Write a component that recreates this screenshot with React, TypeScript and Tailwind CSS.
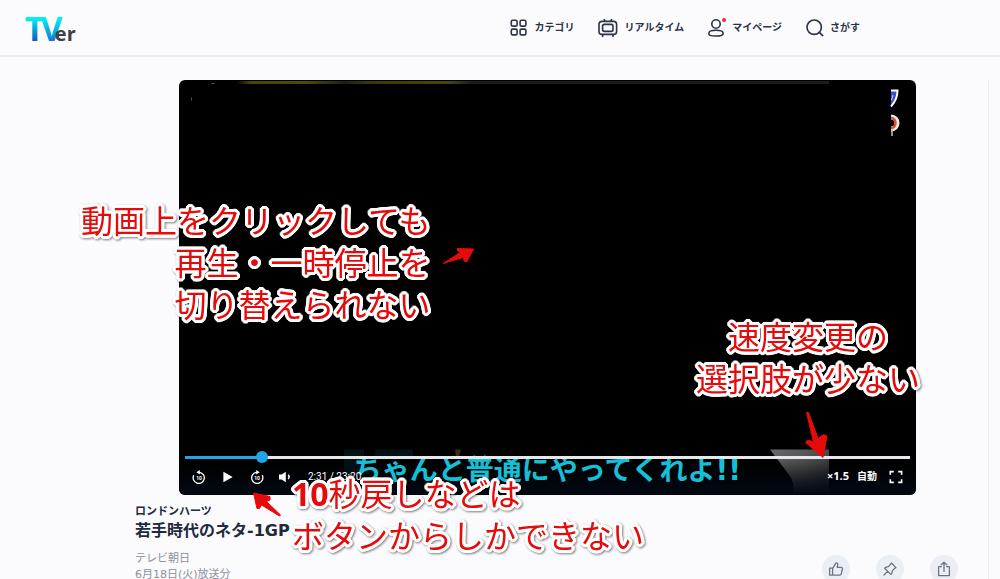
import { useState } from "react";
import type { ReactNode } from "react";

const GridIcon = () => (
  <svg className="h-[18px] w-[18px]" viewBox="0 0 18 18" fill="none" stroke="currentColor" strokeWidth="1.6" aria-hidden="true">
    <rect x="1.3" y="1.3" width="5.8" height="5.8" rx="1.4" />
    <rect x="10.1" y="1.3" width="5.8" height="5.8" rx="1.4" />
    <rect x="1.3" y="10.1" width="5.8" height="5.8" rx="1.4" />
    <rect x="10.1" y="10.1" width="5.8" height="5.8" rx="1.4" />
  </svg>
);

const TvIcon = () => (
  <svg className="h-5 w-5" viewBox="0 0 20 20" fill="none" stroke="currentColor" strokeWidth="1.6" strokeLinecap="round" aria-hidden="true">
    <rect x="1" y="3.4" width="17.6" height="13" rx="3" />
    <rect x="4.6" y="6.4" width="10.4" height="7" rx="1.8" />
    <path d="M7 3.200 6.200 1.600M12.800 3.200l.8-1.600M4.600 16.600v1.800M15 16.600v1.800" />
  </svg>
);

const PersonIcon = () => (
  <span className="relative block">
    <svg className="h-[18px] w-[18px]" viewBox="0 0 18 18" fill="none" stroke="currentColor" strokeWidth="1.6" aria-hidden="true">
      <circle cx="8" cy="5" r="4.2" />
      <path d="M.8 14.400c0-2.200 3-3.200 7.200-3.200s7.200 1 7.200 3.200c0 1.800-1.200 2.600-7.200 2.600S.8 16.200.8 14.400Z" />
    </svg>
    <span className="absolute -top-px right-0 h-1 w-1 rounded-full bg-[#f52828]" />
  </span>
);

const SearchIcon = () => (
  <svg className="h-[18px] w-[18px]" viewBox="0 0 18 18" fill="none" stroke="currentColor" strokeWidth="1.7" strokeLinecap="round" aria-hidden="true">
    <circle cx="8.2" cy="8.2" r="7.2" />
    <path d="m13.400 13.400 3.200 3.200" />
  </svg>
);

const SeekIcon = ({ back }: { back?: boolean }) => (
  <svg className="h-[14px] w-[14px]" viewBox="0 0 14 14" aria-hidden="true">
    <g transform={back ? undefined : "matrix(-1 0 0 1 14 0)"}>
      <path d="M1.600 5.600A5.600 5.600 0 1 0 7.600 2.300" fill="none" stroke="currentColor" strokeWidth="1.300" strokeLinecap="round" />
      <path d="M7.800 0v4.600L4.400 2.300Z" fill="currentColor" />
    </g>
    <text x="7" y="10" fontSize="5" fontWeight="700" textAnchor="middle" fill="currentColor" fontFamily="Roboto, sans-serif">
      10
    </text>
  </svg>
);

const PlayIcon = () => (
  <svg className="h-[14px] w-[14px]" viewBox="0 0 14 14" fill="currentColor" aria-hidden="true">
    <path d="M2.400 1.800v10.400L11.600 7Z" />
  </svg>
);

const VolumeIcon = () => (
  <svg className="h-[14px] w-[14px]" viewBox="0 0 14 14" aria-hidden="true">
    <path d="M0 4.600h2.700L6.800 1.800v10.400L2.700 9.400H0Z" fill="currentColor" />
    <path d="M9.200 4.800c1.100 1.200 1.100 3 0 4.200" fill="none" stroke="currentColor" strokeWidth="1.400" />
  </svg>
);

const FullscreenIcon = () => (
  <svg className="h-[14px] w-[14px]" viewBox="0 0 14 14" fill="none" stroke="currentColor" strokeWidth="1.600" aria-hidden="true">
    <path d="M1.300 4.800V1.600h3.500M9.200 1.600h3.400v3.200M12.600 9.200v3.200H9.200M4.800 12.400H1.300V9.200" />
  </svg>
);

const ThumbIcon = () => (
  <svg className="h-4 w-4" viewBox="0 0 16 16" fill="none" stroke="currentColor" strokeWidth="1.300" strokeLinejoin="round" aria-hidden="true">
    <path d="M1.600 7.200h3v7h-3ZM4.600 7.600 8 1.800c1.600 0 2 1 1.700 2.200l-.5 2.400h3.900c1 0 1.500.7 1.300 1.600l-1.100 4.900c-.2.900-.8 1.300-1.600 1.300H4.600" />
  </svg>
);

const PinIcon = () => (
  <svg className="h-4 w-4" viewBox="0 0 16 16" fill="none" stroke="currentColor" strokeWidth="1.300" strokeLinejoin="round" strokeLinecap="round" aria-hidden="true">
    <path d="M9.400 2 14 6.600 12.800 7.300 10.400 9.600 9.800 12.600 8.800 13.400 2.700 7.300 3.400 6.300 6.400 5.600 8.700 3.200ZM5.600 10.400 2 14" />
  </svg>
);

const ShareIcon = () => (
  <svg className="h-4 w-4" viewBox="0 0 16 16" fill="none" stroke="currentColor" strokeWidth="1.300" strokeLinejoin="round" strokeLinecap="round" aria-hidden="true">
    <path d="M5.400 5.600H2.600v9h10.800v-9h-2.800M8 10.400V1.400M5.200 3.800 8 1.200l2.800 2.600" />
  </svg>
);

const navItems = [
  { label: "カテゴリ", icon: <GridIcon /> },
  { label: "リアルタイム", icon: <TvIcon /> },
  { label: "マイページ", icon: <PersonIcon /> },
  { label: "さがす", icon: <SearchIcon /> },
];

const Header = () => (
  <header className="flex h-[57px] items-center justify-between border-b-2 border-[#e9edf5] pr-[140px] pl-[25px]">
    <a href="#" aria-label="TVer" className="flex items-baseline font-['Open_Sans',sans-serif] font-bold">
      <span className="bg-linear-to-b from-[#05eef5] from-25% to-[#1b55bd] to-85% bg-clip-text text-[34px] leading-9 text-transparent">
        T
      </span>
      <span className="-ml-1 bg-linear-to-b from-[#05eef5] from-25% to-[#1b75cd] to-85% bg-clip-text text-[34px] leading-9 text-transparent">
        V
      </span>
      <span className="-ml-2 text-xl leading-6 text-[#3f3f41]">er</span>
    </a>
    <nav className="flex items-center gap-6">
      {navItems.map((item) => (
        <a key={item.label} href="#" className="flex items-center gap-[6px] text-[10px] font-bold whitespace-nowrap text-[#2b3345]">
          {item.icon}
          {item.label}
        </a>
      ))}
    </nav>
  </header>
);

const Frame = () => (
  <svg className="absolute inset-0 h-full w-full" viewBox="0 0 737 414" preserveAspectRatio="none" aria-hidden="true">
    <defs>
      <linearGradient id="strip">
        <stop offset="0" stopColor="#4a4600" stopOpacity="0" />
        <stop offset=".06" stopColor="#4a4602" />
        <stop offset=".3" stopColor="#4f4a04" />
        <stop offset=".46" stopColor="#1d1f14" />
        <stop offset=".56" stopColor="#3a3705" />
        <stop offset=".9" stopColor="#4a4608" />
        <stop offset="1" stopColor="#1c1e14" />
      </linearGradient>
      <linearGradient id="shade" x2="0" y2="1">
        <stop offset="0" stopColor="#02050b" stopOpacity="0" />
        <stop offset="1" stopColor="#030914" />
      </linearGradient>
      <linearGradient id="sleeve" x2="1" y2="1">
        <stop offset="0" stopColor="#6b6b6b" />
        <stop offset=".5" stopColor="#4c4c4c" />
        <stop offset="1" stopColor="#161a1e" />
      </linearGradient>
    </defs>
    <rect x="57" y="1" width="236" height="3" fill="url(#strip)" />
    <rect x="290" y="1" width="360" height="3" fill="#1c1e14" />
    <rect x="32" y="3" width="4" height="1" fill="#444" />
    <rect x="12" y="17" width="1" height="4" fill="#444" />
    <path d="M712 11h6q0 9-6 15Z" fill="#3a50d0" />
    <path d="M712 10.500h6.500q0 9-6.500 16" fill="none" stroke="#fff" strokeWidth="2" />
    <path d="M714 15l-1.500 5" stroke="#cdd3f5" />
    <path d="M712 37c8 0 8 12 0 12" fill="none" stroke="#f4e6e0" strokeWidth="5" />
    <path d="M712 38c6 0 6 10 0 10" fill="none" stroke="#e0502c" strokeWidth="2.500" />
    <path d="M713 49v7" stroke="#c9bfb8" strokeWidth="1.500" />
    <path d="M165 369h20v24h-20ZM196 369h38v10h-38Z" fill="#021217" />
    <path d="M276 369h6l-2 7h-3Z" fill="#33301c" />
    <path d="M591 369h59v44h-36q2-12-5-20Z" fill="url(#sleeve)" />
    <rect y="378" width="737" height="36" fill="url(#shade)" />
  </svg>
);

const ControlButton = ({ label, children }: { label: string; children: ReactNode }) => (
  <button type="button" aria-label={label} className="cursor-pointer">
    {children}
  </button>
);

const Player = () => {
  const [position, setPosition] = useState(99);
  const filled = `${0.8 + position * 0.0983}%`;

  return (
    <section className="relative mx-11 flex aspect-video flex-col justify-end overflow-hidden rounded-md bg-black text-white">
      <Frame />
      <p className="absolute inset-x-0 bottom-2 text-center text-[28px] leading-8 font-bold whitespace-nowrap text-[#14c0d8]">
        ちゃんと普通にやってくれよ!!
      </p>
      <input
        type="range"
        aria-label="再生位置"
        max={1000}
        value={position}
        onChange={(e) => setPosition(Number(e.target.value))}
        style={{ backgroundImage: `linear-gradient(to right, #20a4ec ${filled}, #e6e8ee ${filled})` }}
        className="relative mx-[6px] h-[3px] cursor-pointer appearance-none [&::-webkit-slider-thumb]:h-3 [&::-webkit-slider-thumb]:w-3 [&::-webkit-slider-thumb]:appearance-none [&::-webkit-slider-thumb]:rounded-full [&::-webkit-slider-thumb]:bg-[#20a4ec]"
      />
      <div className="relative flex h-9 items-center justify-between px-[13px] text-[10px]">
        <div className="flex items-center gap-[15px]">
          <ControlButton label="10秒戻る"><SeekIcon back /></ControlButton>
          <ControlButton label="再生"><PlayIcon /></ControlButton>
          <ControlButton label="10秒進む"><SeekIcon /></ControlButton>
          <ControlButton label="音量"><VolumeIcon /></ControlButton>
          <span className="font-['Roboto',sans-serif]">2:31 / 23:20</span>
        </div>
        <div className="flex items-center gap-2 font-bold">
          <button type="button" className="cursor-pointer font-['Open_Sans',sans-serif] text-[11px]">×1.5</button>
          <button type="button" className="mr-1 cursor-pointer">自動</button>
          <ControlButton label="全画面"><FullscreenIcon /></ControlButton>
        </div>
      </div>
    </section>
  );
};

const actions = [
  { label: "いいね", icon: <ThumbIcon /> },
  { label: "お気に入り", icon: <PinIcon /> },
  { label: "共有", icon: <ShareIcon /> },
];

const Details = () => (
  <section className="flex items-start justify-between pt-2">
    <div>
      <p className="text-[11px] leading-[18px] font-bold">ロンドンハーツ</p>
      <h1 className="text-base leading-5 font-bold">若手時代のネタ-1GP</h1>
      <div className="pt-[10px] text-[11px] leading-4 text-[#8b909b]">
        <p>テレビ朝日</p>
        <p>6月18日(火)放送分</p>
      </div>
    </div>
    <div className="flex gap-[26px] pt-[52px] pr-[2px]">
      {actions.map((action) => (
        <button
          key={action.label}
          type="button"
          aria-label={action.label}
          className="flex h-7 w-7 cursor-pointer items-center justify-center rounded-full bg-[#eaeef5] text-[#6f7480]"
        >
          {action.icon}
        </button>
      ))}
    </div>
  </section>
);

const Callout = ({ className, children }: { className: string; children: ReactNode }) => (
  <p
    className={`pointer-events-none absolute text-[32px] leading-[42px] font-normal whitespace-nowrap text-[#e60a0a] drop-shadow-[1px_1px_1px_rgba(0,0,0,0.5)] [text-shadow:3px_0_#fff,-3px_0_#fff,0_3px_#fff,0_-3px_#fff,2px_2px_#fff,-2px_2px_#fff,2px_-2px_#fff,-2px_-2px_#fff,3px_1px_#fff,3px_-1px_#fff,-3px_1px_#fff,-3px_-1px_#fff,1px_3px_#fff,-1px_3px_#fff,1px_-3px_#fff,-1px_-3px_#fff,1px_0_#fff,-1px_0_#fff] ${className}`}
  >
    {children}
  </p>
);

const Arrows = () => (
  <svg
    className="pointer-events-none absolute top-0 left-0 overflow-visible"
    width="1"
    height="1"
    fill="#e60a0a"
    stroke="#e60a0a"
    strokeLinejoin="round"
    aria-hidden="true"
  >
    <path d="M443 263.500 460 252.700 457 250 457.500 248.500 473.500 249 467 261.500 464.500 261.500 463 257.500Z" />
    <path d="M806.500 412.500H808.500L818 438.500 823.500 434.500 827 436 823 457.500 805.500 442.500 808 440 813.500 442Z" />
    <path d="M253.500 493 270 496.500V500L266.500 501.500 280.500 515 279.500 516 261.500 505 259.500 508.500 257 508.500Z" />
  </svg>
);

export default function App() {
  return (
    <div
      lang="ja"
      className="relative flex min-h-screen flex-col bg-[#fbfbfe] font-['DejaVu_Sans','Noto_Sans_CJK_JP',sans-serif] text-[#222a3a]"
    >
      <Header />
      <div className="flex flex-1 gap-7 pt-[23px] pl-[135px]">
        <main className="min-w-0 flex-1">
          <Player />
          <Details />
        </main>
        <aside className="w-3 border-l border-[#e9edf5]" />
      </div>
      <Callout className="top-[201px] left-[81px] text-right">
        動画上をクリックしても
        <br />
        再生・一時停止を
        <br />
        切り替えられない
      </Callout>
      <Callout className="top-[317px] left-[696px] text-center">
        速度変更の
        <br />
        選択肢が少ない
      </Callout>
      <Callout className="top-[473px] left-[292px]">
        <span className="font-['Noto_Sans',sans-serif] font-bold">10</span>秒戻しなどは
        <br />
        ボタンからしかできない
      </Callout>
      <Arrows />
    </div>
  );
}
